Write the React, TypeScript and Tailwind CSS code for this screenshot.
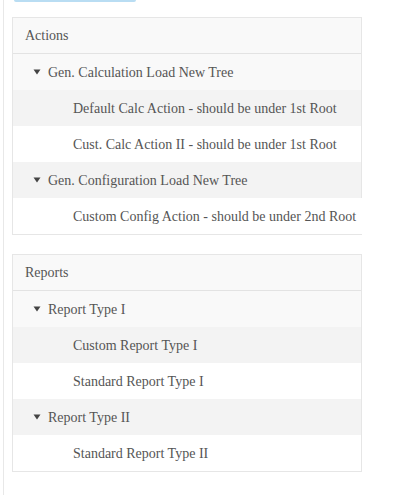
import React from "react";

type Row = { label: string; level: 0 | 1; bg: string };

const Caret = () => (
  <svg width="8" height="6" viewBox="0 0 8 6" className="shrink-0">
    <path d="M0.5 0.5 L7.5 0.5 L4 5.5 Z" fill="#444" />
  </svg>
);

function Panel({ title, rows }: { title: string; rows: Row[] }) {
  return (
    <div className="w-[350px] border border-[#e6e6e6] bg-white">
      <div className="h-[36px] flex items-center pl-[12px] bg-[#f9f9f9] border-b border-[#e3e3e3] w-max min-w-full pr-[12px]">
        {title}
      </div>
      {rows.map((r, i) => (
        <div
          key={i}
          className={`h-[36px] flex items-center whitespace-nowrap w-max min-w-full pr-[11px] ${r.bg} ${
            r.level === 0 ? "pl-[20px] gap-[7px]" : "pl-[60px]"
          }`}
        >
          {r.level === 0 && <Caret />}
          <span>{r.label}</span>
        </div>
      ))}
    </div>
  );
}

export default function App() {
  return (
    <div className="w-[403px] h-[495px] bg-white text-[14px] text-[#555] relative overflow-hidden font-['Liberation_Serif','Times_New_Roman',serif]">
      <div className="absolute left-[3px] top-0 bottom-0 w-px bg-[#e8e8e8]" />
      <div className="ml-[14px] w-[122px] h-[2px] bg-[#b9ddf3] rounded-b-[2px]" />
      <div className="pl-[12px] pt-[15px] flex flex-col gap-[19px]">
        <Panel
          title="Actions"
          rows={[
            { label: "Gen. Calculation Load New Tree", level: 0, bg: "bg-[#f9f9f9]" },
            { label: "Default Calc Action - should be under 1st Root", level: 1, bg: "bg-[#f3f3f3]" },
            { label: "Cust. Calc Action II - should be under 1st Root", level: 1, bg: "bg-white" },
            { label: "Gen. Configuration Load New Tree", level: 0, bg: "bg-[#f3f3f3]" },
            { label: "Custom Config Action - should be under 2nd Root", level: 1, bg: "bg-white" },
          ]}
        />
        <Panel
          title="Reports"
          rows={[
            { label: "Report Type I", level: 0, bg: "bg-[#f9f9f9]" },
            { label: "Custom Report Type I", level: 1, bg: "bg-[#f3f3f3]" },
            { label: "Standard Report Type I", level: 1, bg: "bg-white" },
            { label: "Report Type II", level: 0, bg: "bg-[#f3f3f3]" },
            { label: "Standard Report Type II", level: 1, bg: "bg-white" },
          ]}
        />
      </div>
    </div>
  );
}
